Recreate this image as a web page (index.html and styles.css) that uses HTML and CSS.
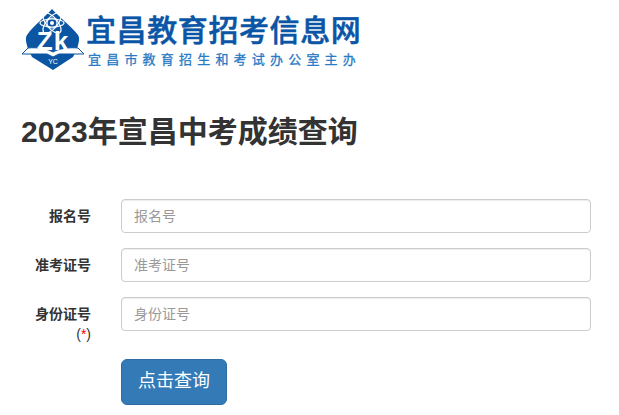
FILE: index.html
```html
<!DOCTYPE html>
<html lang="zh-CN">
<head>
<meta charset="utf-8">
<title>2023年宣昌中考成绩查询</title>
<link rel="stylesheet" href="styles.css">
</head>
<body>
<header class="brand">
  <svg class="brand-mark" width="66" height="62" viewBox="0 0 66 62" aria-hidden="true">
    <path d="M31 0 C36 6 50 17 57 26 C59 29 58 33 56 40 L52 48 L32 61 L11 48 L7 40 C5 33 4 29 6 26 C12 17 26 6 31 0 Z" fill="#0b55a3"/>
    <path d="M1 45 L7 39 C17 38 27 40 32 43 C37 40 47 38 57 39 L63 45 L38 45 L32 48 L26 45 Z" fill="#fff" stroke="#0b55a3" stroke-width="1"/>
    <g fill="none" stroke="#fff" stroke-width="1.1">
      <ellipse cx="31" cy="14" rx="5.5" ry="12.5" transform="rotate(40 31 14)"/>
      <ellipse cx="31" cy="14" rx="5.5" ry="12.5" transform="rotate(-40 31 14)"/>
      <ellipse cx="31" cy="14" rx="12" ry="4"/>
      <circle cx="31" cy="14" r="5"/>
    </g>
    <circle cx="31" cy="14" r="2" fill="#fff"/>
    <text class="mark-zk" x="32" y="41" text-anchor="middle">Zk</text>
    <text class="mark-yc" x="32" y="55" text-anchor="middle">YC</text>
  </svg>
  <div class="brand-text">
    <div class="brand-title">宜昌教育招考信息网</div>
    <div class="brand-sub">宜昌市教育招生和考试办公室主办</div>
  </div>
</header>
<main class="content">
  <h1 class="page-title">2023年宣昌中考成绩查询</h1>
  <form class="query-form">
    <div class="form-row">
      <label class="form-label" for="a">报名号</label>
      <input class="form-input" id="a" placeholder="报名号">
    </div>
    <div class="form-row">
      <label class="form-label" for="b">准考证号</label>
      <input class="form-input" id="b" placeholder="准考证号">
    </div>
    <div class="form-row">
      <label class="form-label" for="c">身份证号<br><span class="req">(<span class="req-star">*</span>)</span></label>
      <input class="form-input" id="c" placeholder="身份证号">
    </div>
    <div class="form-row">
      <span class="form-label"></span>
      <button class="submit" type="button">点击查询</button>
    </div>
  </form>
</main>
</body>
</html>
```
FILE: styles.css
```css
* { box-sizing: border-box; }
html, body { margin: 0; padding: 0; }
body {
  background: #fff;
  color: #333;
  font: 14px/20px "Liberation Sans", "Noto Sans CJK SC", sans-serif;
  overflow: hidden;
}
.brand {
  display: flex;
  align-items: flex-start;
  padding: 9px 0 0 21px;
  height: 88px;
}
.brand-mark { flex: none; display: block; }
.brand-text { margin-left: -1px; padding-top: 4px; }
.brand-title {
  font-size: 30px;
  line-height: 36px;
  font-weight: 500;
  -webkit-text-stroke: 0.5px #0a55a5;
  letter-spacing: 0.6px;
  color: #0a55a5;
  white-space: nowrap;
}
.brand-sub {
  margin: 3px 0 0 2px;
  font-size: 13px;
  line-height: 16px;
  font-weight: 400;
  -webkit-text-stroke: 0.3px #2a7bc6;
  letter-spacing: 5.2px;
  color: #2a7bc6;
  white-space: nowrap;
}
.mark-zk { font: bold 26px "Liberation Sans", sans-serif; fill: #fff; letter-spacing: 1px; }
.mark-yc { font: 7px "Liberation Sans", sans-serif; fill: #fff; }
.content { padding: 0 28px 0 21px; }
.page-title {
  margin: 22px 0 45px;
  font-size: 30px;
  line-height: 44px;
  font-weight: 700;
  color: #333;
}
.query-form { display: flex; flex-direction: column; gap: 15px; }
.form-row { display: flex; align-items: flex-start; gap: 30px; }
.form-label {
  width: 70px;
  flex: none;
  padding-top: 7px;
  text-align: right;
  font-weight: 700;
}
.req { font-weight: 400; }
.req-star { color: #f00; }
.form-input {
  flex: 1;
  min-width: 0;
  height: 34px;
  padding: 6px 12px;
  border: 1px solid #ccc;
  border-radius: 4px;
  box-shadow: inset 0 1px 1px rgba(0,0,0,.075);
  font: inherit;
  color: #555;
}
.form-input::placeholder { color: #999; opacity: 1; }
.submit {
  height: 46px;
  padding: 10px 16px;
  border: 1px solid #2e6da4;
  border-radius: 6px;
  background: #337ab7;
  color: #fff;
  font: 18px/1.33 "Liberation Sans", "Noto Sans CJK SC", sans-serif;
}
```
